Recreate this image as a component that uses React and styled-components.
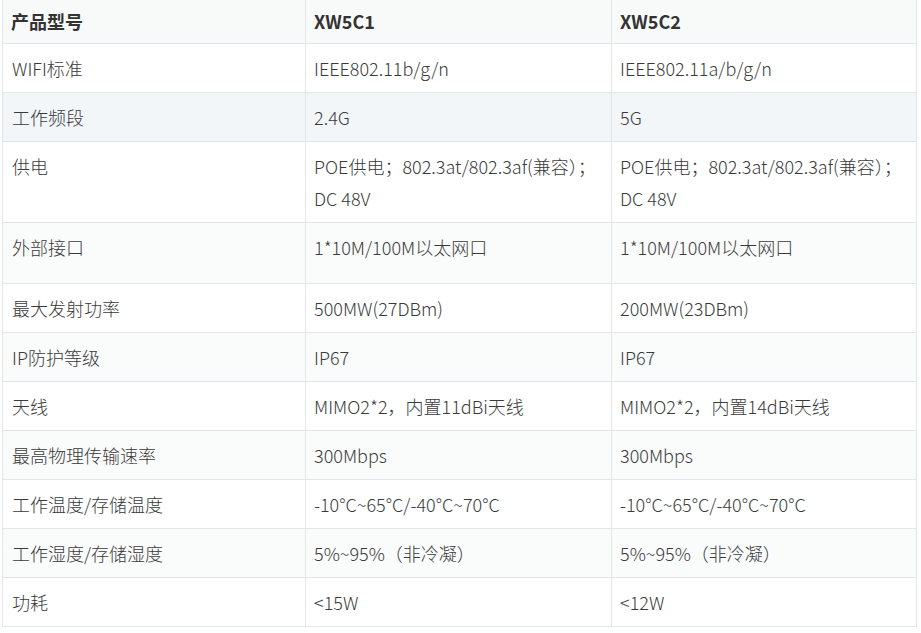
import React from 'react';
import styled, { createGlobalStyle } from 'styled-components';

const GlobalStyle = createGlobalStyle`
  html, body {
    margin: 0;
    padding: 0;
    background: #ffffff;
  }
  body {
    font-family: "Noto Sans CJK SC", "Noto Sans", sans-serif;
    color: #383838;
  }
`;

const Wrapper = styled.div`
  padding: 0 5px 0 2px;
`;

const Table = styled.table`
  width: 914px;
  border-collapse: collapse;
  table-layout: fixed;
  font-size: 18px;
  line-height: 32px;
`;

const Col = styled.col`
  width: ${(p) => p.$w}px;
`;

const HeadCell = styled.th`
  text-align: left;
  font-weight: bold;
  padding: 5px 8px 6px;
  border: 1px solid #e1e6eb;
  border-top: none;
  background: #f8f9f9;
  color: #333333;
`;

const Row = styled.tr`
  background: ${(p) => (p.$hover ? '#f3f6f9' : p.$striped ? '#fafbfb' : '#ffffff')};
`;

const Cell = styled.td`
  vertical-align: top;
  padding: 8px 8px ${(p) => (p.$extra ? 20 : 8)}px;
  border: 1px solid #e1e6eb;
  color: #3a3a3a;
  font-weight: 300;
  white-space: nowrap;
`;

const LabelCell = styled(Cell)`
  padding-left: 9px;
`;

const power = (
  <>
    POE供电；802.3at/802.3af(兼容）；
    <br />
    DC 48V
  </>
);

const rows = [
  ['WIFI标准', 'IEEE802.11b/g/n', 'IEEE802.11a/b/g/n'],
  ['工作频段', '2.4G', '5G'],
  ['供电', power, power],
  ['外部接口', '1*10M/100M以太网口', '1*10M/100M以太网口', true],
  ['最大发射功率', '500MW(27DBm)', '200MW(23DBm)'],
  ['IP防护等级', 'IP67', 'IP67'],
  ['天线', 'MIMO2*2，内置11dBi天线', 'MIMO2*2，内置14dBi天线'],
  ['最高物理传输速率', '300Mbps', '300Mbps'],
  ['工作温度/存储温度', '-10°C~65°C/-40°C~70°C', '-10°C~65°C/-40°C~70°C'],
  ['工作湿度/存储湿度', '5%~95%（非冷凝）', '5%~95%（非冷凝）'],
  ['功耗', '<15W', '<12W'],
];

export default function App() {
  return (
    <Wrapper>
      <GlobalStyle />
      <Table>
        <colgroup>
          <Col $w={303} />
          <Col $w={306} />
          <Col $w={305} />
        </colgroup>
        <thead>
          <tr>
            <HeadCell>产品型号</HeadCell>
            <HeadCell>XW5C1</HeadCell>
            <HeadCell>XW5C2</HeadCell>
          </tr>
        </thead>
        <tbody>
          {rows.map(([label, a, b, extra], i) => (
            <Row key={label} $striped={i % 2 === 1} $hover={i === 1}>
              <LabelCell $extra={extra}>{label}</LabelCell>
              <Cell $extra={extra}>{a}</Cell>
              <Cell $extra={extra}>{b}</Cell>
            </Row>
          ))}
        </tbody>
      </Table>
    </Wrapper>
  );
}
